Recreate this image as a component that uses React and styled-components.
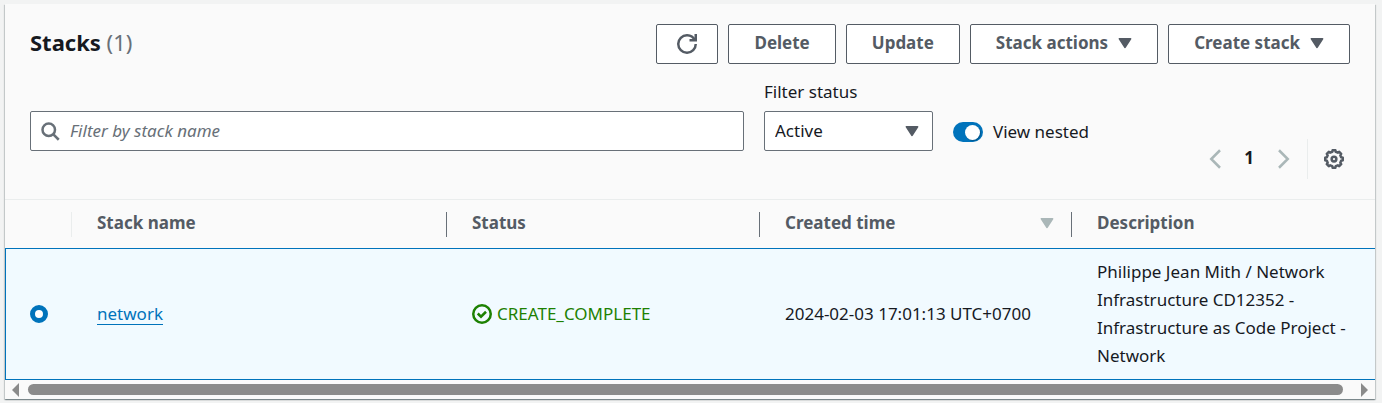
import React from "react";
import styled, { createGlobalStyle, css } from "styled-components";

const c = {
  text: "#16191f",
  secondary: "#545b64",
  muted: "#687078",
  disabled: "#aab7b8",
  line: "#eaeded",
  blue: "#0073bb",
  green: "#1d8102",
  panel: "#fafafa",
  selected: "#f1faff",
};

const GlobalStyle = createGlobalStyle`
  *, *::before, *::after { box-sizing: border-box; }
  body {
    margin: 0;
    background: #f2f3f3;
    color: ${c.text};
    font: 17px/28px "Noto Sans", "Open Sans", sans-serif;
  }
  button, input, select { font: inherit; color: inherit; margin: 0; }
`;

const Page = styled.div`
  padding: 4px 7px 4px 5px;
`;

const Panel = styled.main`
  background: ${c.panel};
  box-shadow: 0 1px 1px rgba(0, 28, 36, 0.3), 1px 1px 1px rgba(0, 28, 36, 0.15),
    -1px 1px 1px rgba(0, 28, 36, 0.15);
`;

const Header = styled.header`
  display: flex;
  justify-content: space-between;
  align-items: flex-start;
  padding: 20px 25px 0;
`;

const Title = styled.h1`
  margin: 0;
  padding-top: 3px;
  font-size: 22px;
  line-height: 30px;
  font-weight: 700;
`;

const Count = styled.span`
  color: ${c.muted};
  font-weight: 400;
`;

const Actions = styled.div`
  display: flex;
  gap: 10px;
`;

const Button = styled.button`
  display: flex;
  align-items: center;
  justify-content: center;
  gap: 10px;
  height: 40px;
  padding: ${(p) => (p.$icon ? "0 20px" : "0 25px 2px")};
  border: 1px solid ${c.secondary};
  border-radius: 2px;
  background: #fff;
  color: ${c.secondary};
  font-weight: 700;
  white-space: nowrap;
  cursor: pointer;
`;

const Toolbar = styled.div`
  display: flex;
  align-items: flex-end;
  gap: 12px;
  padding: 14px 25px 20px;
`;

const Filters = styled.div`
  flex: 1;
  display: grid;
  grid-template-columns: minmax(0, 1fr) 169px 236px;
  align-items: end;
  gap: 20px;
  padding-bottom: 28px;
`;

const SearchBox = styled.label`
  display: flex;
  align-items: center;
  gap: 10px;
  height: 40px;
  padding: 0 9px;
  border: 1px solid ${c.muted};
  border-radius: 2px;
  background: #fff;
`;

const SearchInput = styled.input`
  flex: 1;
  min-width: 0;
  padding: 0;
  border: 0;
  outline: 0;
  background: none;
  &::placeholder {
    color: ${c.muted};
    font-style: italic;
    opacity: 1;
  }
`;

const Field = styled.div`
  display: flex;
  flex-direction: column;
  gap: 5px;
`;

const SelectBox = styled.div`
  display: grid;
  align-items: center;
  > * { grid-area: 1 / 1; }
  > svg {
    justify-self: end;
    margin-right: 14px;
    pointer-events: none;
  }
`;

const Select = styled.select`
  appearance: none;
  width: 100%;
  height: 40px;
  padding: 0 36px 0 10px;
  border: 1px solid ${c.muted};
  border-radius: 2px;
  background: #fff;
`;

const ToggleLabel = styled.label`
  display: flex;
  align-items: center;
  gap: 10px;
  height: 38px;
`;

const Toggle = styled.input`
  appearance: none;
  display: flex;
  justify-content: flex-end;
  align-items: center;
  width: 30px;
  height: 20px;
  padding: 0 3px;
  border-radius: 10px;
  background: ${c.blue};
  &::before {
    content: "";
    width: 15px;
    height: 15px;
    border-radius: 50%;
    background: #fff;
    box-shadow: 1px 1px 1px rgba(0, 0, 0, 0.25);
  }
  &:not(:checked) {
    justify-content: flex-start;
    background: ${c.muted};
  }
`;

const Pager = styled.nav`
  display: flex;
  align-items: center;
  height: 40px;
`;

const IconButton = styled.button`
  display: flex;
  align-items: center;
  justify-content: center;
  width: ${(p) => p.$width}px;
  height: 40px;
  padding: 0;
  border: 0;
  background: none;
  color: ${(p) => (p.disabled ? c.disabled : c.secondary)};
`;

const PageNumber = styled.button`
  width: 40px;
  padding: 0 0 2px;
  border: 0;
  background: none;
  font-weight: 700;
`;

const Preferences = styled.div`
  margin-left: 8px;
  padding-left: 10px;
  border-left: 1px solid ${c.line};
`;

const Table = styled.table`
  width: 100%;
  table-layout: fixed;
  border-collapse: separate;
  border-spacing: 0;
`;

const Col = styled.col`
  width: ${(p) => (p.$width ? `${p.$width}px` : "auto")};
`;

const HeadCell = styled.th`
  height: 49px;
  padding: 0;
  border-top: 1px solid ${c.line};
  color: ${c.secondary};
  font-weight: 700;
  text-align: left;
`;

const HeadContent = styled.div`
  display: flex;
  align-items: center;
  justify-content: space-between;
  height: 25px;
  padding: 0 17px 2px 25px;
  border-right: 1px solid
    ${(p) => (p.$divider === "light" ? c.line : p.$divider ? c.muted : "transparent")};
`;

const Cell = styled.td`
  padding: 9px 25px;
  border-top: 1px solid ${c.blue};
  border-bottom: 1px solid ${c.blue};
  background: ${c.selected};
  vertical-align: middle;
  ${(p) =>
    p.$first &&
    css`
      padding: 0 0 0 24px;
      border-left: 1px solid ${c.blue};
    `}
`;

const Radio = styled.input`
  appearance: none;
  display: block;
  width: 18px;
  height: 18px;
  border: 1px solid ${c.muted};
  border-radius: 50%;
  background: #fff;
  &:checked { border: 5px solid ${c.blue}; }
`;

const StackLink = styled.a`
  display: inline-block;
  border-bottom: 1px solid ${c.blue};
  color: ${c.blue};
  line-height: 20px;
  text-decoration: none;
`;

const Status = styled.span`
  display: flex;
  align-items: center;
  gap: 5px;
  color: ${c.green};
`;

const ScrollBar = styled.div`
  display: flex;
  align-items: center;
  gap: 8px;
  height: 19px;
  padding: 0 7px;
  color: #8b8b8b;
`;

const Thumb = styled.div`
  flex: 1;
  height: 11px;
  margin-right: 9px;
  border-radius: 6px;
  background: #8b8b8b;
`;

const Icon = ({ size = 20, children, ...rest }) => (
  <svg width={size} height={size} viewBox="0 0 16 16" fill="none" stroke="currentColor"
    strokeWidth="2" aria-hidden="true" {...rest}>
    {children}
  </svg>
);

const Caret = ({ color = c.secondary }) => (
  <svg width="14" height="12" viewBox="0 0 14 12" aria-hidden="true">
    <path d="M1.5 1.8h11L7 10.2z" fill={color} stroke={color} strokeWidth="1.8" strokeLinejoin="round" />
  </svg>
);

const RefreshIcon = () => (
  <Icon>
    <path d="M10 5h5V0" />
    <path d="M15 8a6.96 6.96 0 0 1-7 7 6.96 6.96 0 0 1-7-7 6.96 6.96 0 0 1 7-7 6.87 6.87 0 0 1 6.3 4" />
  </Icon>
);

const SearchIcon = () => (
  <Icon color={c.muted}>
    <circle cx="7" cy="7" r="5" />
    <path d="m15 15-4.5-4.5" />
  </Icon>
);

const ChevronIcon = ({ right }) => (
  <Icon>
    <path d={right ? "m4 1 7 7-7 7" : "m12 1-7 7 7 7"} />
  </Icon>
);

const GEAR_PATH = (() => {
  const points = [];
  for (let i = 0; i < 8; i++) {
    [[-14, 5.9], [-9, 7.1], [9, 7.1], [14, 5.9]].forEach(([offset, r]) => {
      const a = ((i * 45 + offset) * Math.PI) / 180;
      points.push(`${(8 + r * Math.cos(a)).toFixed(2)} ${(8 + r * Math.sin(a)).toFixed(2)}`);
    });
  }
  return `M${points.join("L")}Z`;
})();

const GearIcon = () => (
  <Icon strokeWidth="2" strokeLinejoin="round">
    <path d={GEAR_PATH} />
    <circle cx="8" cy="8" r="1.9" />
  </Icon>
);

const SuccessIcon = () => (
  <Icon>
    <circle cx="8" cy="8" r="7" />
    <path d="m4.6 7.6 2.6 2.6 4-4" />
  </Icon>
);

const ScrollArrow = ({ right }) => (
  <svg width="8" height="14" viewBox="0 0 8 14" fill="currentColor" aria-hidden="true">
    <path d={right ? "M1 0v14l7-7z" : "M7 0v14L0 7z"} />
  </svg>
);

export default function App() {
  return (
    <Page>
      <GlobalStyle />
      <Panel>
        <Header>
          <Title>
            Stacks <Count>(1)</Count>
          </Title>
          <Actions>
            <Button $icon aria-label="Refresh"><RefreshIcon /></Button>
            <Button>Delete</Button>
            <Button>Update</Button>
            <Button>Stack actions <Caret /></Button>
            <Button>Create stack <Caret /></Button>
          </Actions>
        </Header>
        <Toolbar>
          <Filters>
            <SearchBox>
              <SearchIcon />
              <SearchInput type="text" placeholder="Filter by stack name" aria-label="Filter by stack name" />
            </SearchBox>
            <Field>
              <label htmlFor="status">Filter status</label>
              <SelectBox>
                <Select id="status" defaultValue="Active">
                  <option>Active</option>
                </Select>
                <Caret />
              </SelectBox>
            </Field>
            <ToggleLabel>
              <Toggle type="checkbox" defaultChecked />
              View nested
            </ToggleLabel>
          </Filters>
          <Pager aria-label="Pagination">
            <IconButton $width={28} disabled aria-label="Previous page"><ChevronIcon /></IconButton>
            <PageNumber>1</PageNumber>
            <IconButton $width={30} disabled aria-label="Next page"><ChevronIcon right /></IconButton>
            <Preferences>
              <IconButton $width={32} aria-label="Preferences"><GearIcon /></IconButton>
            </Preferences>
          </Pager>
        </Toolbar>
        <Table>
          <colgroup>
            <Col $width={67} />
            <Col $width={375} />
            <Col $width={313} />
            <Col $width={312} />
            <Col />
          </colgroup>
          <thead>
            <tr>
              <HeadCell aria-label="Selection"><HeadContent $divider="light" /></HeadCell>
              <HeadCell><HeadContent $divider="dark">Stack name</HeadContent></HeadCell>
              <HeadCell><HeadContent $divider="dark">Status</HeadContent></HeadCell>
              <HeadCell>
                <HeadContent $divider="dark">Created time <Caret color={c.disabled} /></HeadContent>
              </HeadCell>
              <HeadCell><HeadContent>Description</HeadContent></HeadCell>
            </tr>
          </thead>
          <tbody>
            <tr>
              <Cell $first><Radio type="radio" name="stack" defaultChecked aria-label="network" /></Cell>
              <Cell><StackLink href="#network">network</StackLink></Cell>
              <Cell><Status><SuccessIcon />CREATE_COMPLETE</Status></Cell>
              <Cell>2024-02-03 17:01:13 UTC+0700</Cell>
              <Cell>
                Philippe Jean Mith / Network Infrastructure CD12352 - Infrastructure as Code Project - Network
              </Cell>
            </tr>
          </tbody>
        </Table>
        <ScrollBar>
          <ScrollArrow />
          <Thumb />
          <ScrollArrow right />
        </ScrollBar>
      </Panel>
    </Page>
  );
}
